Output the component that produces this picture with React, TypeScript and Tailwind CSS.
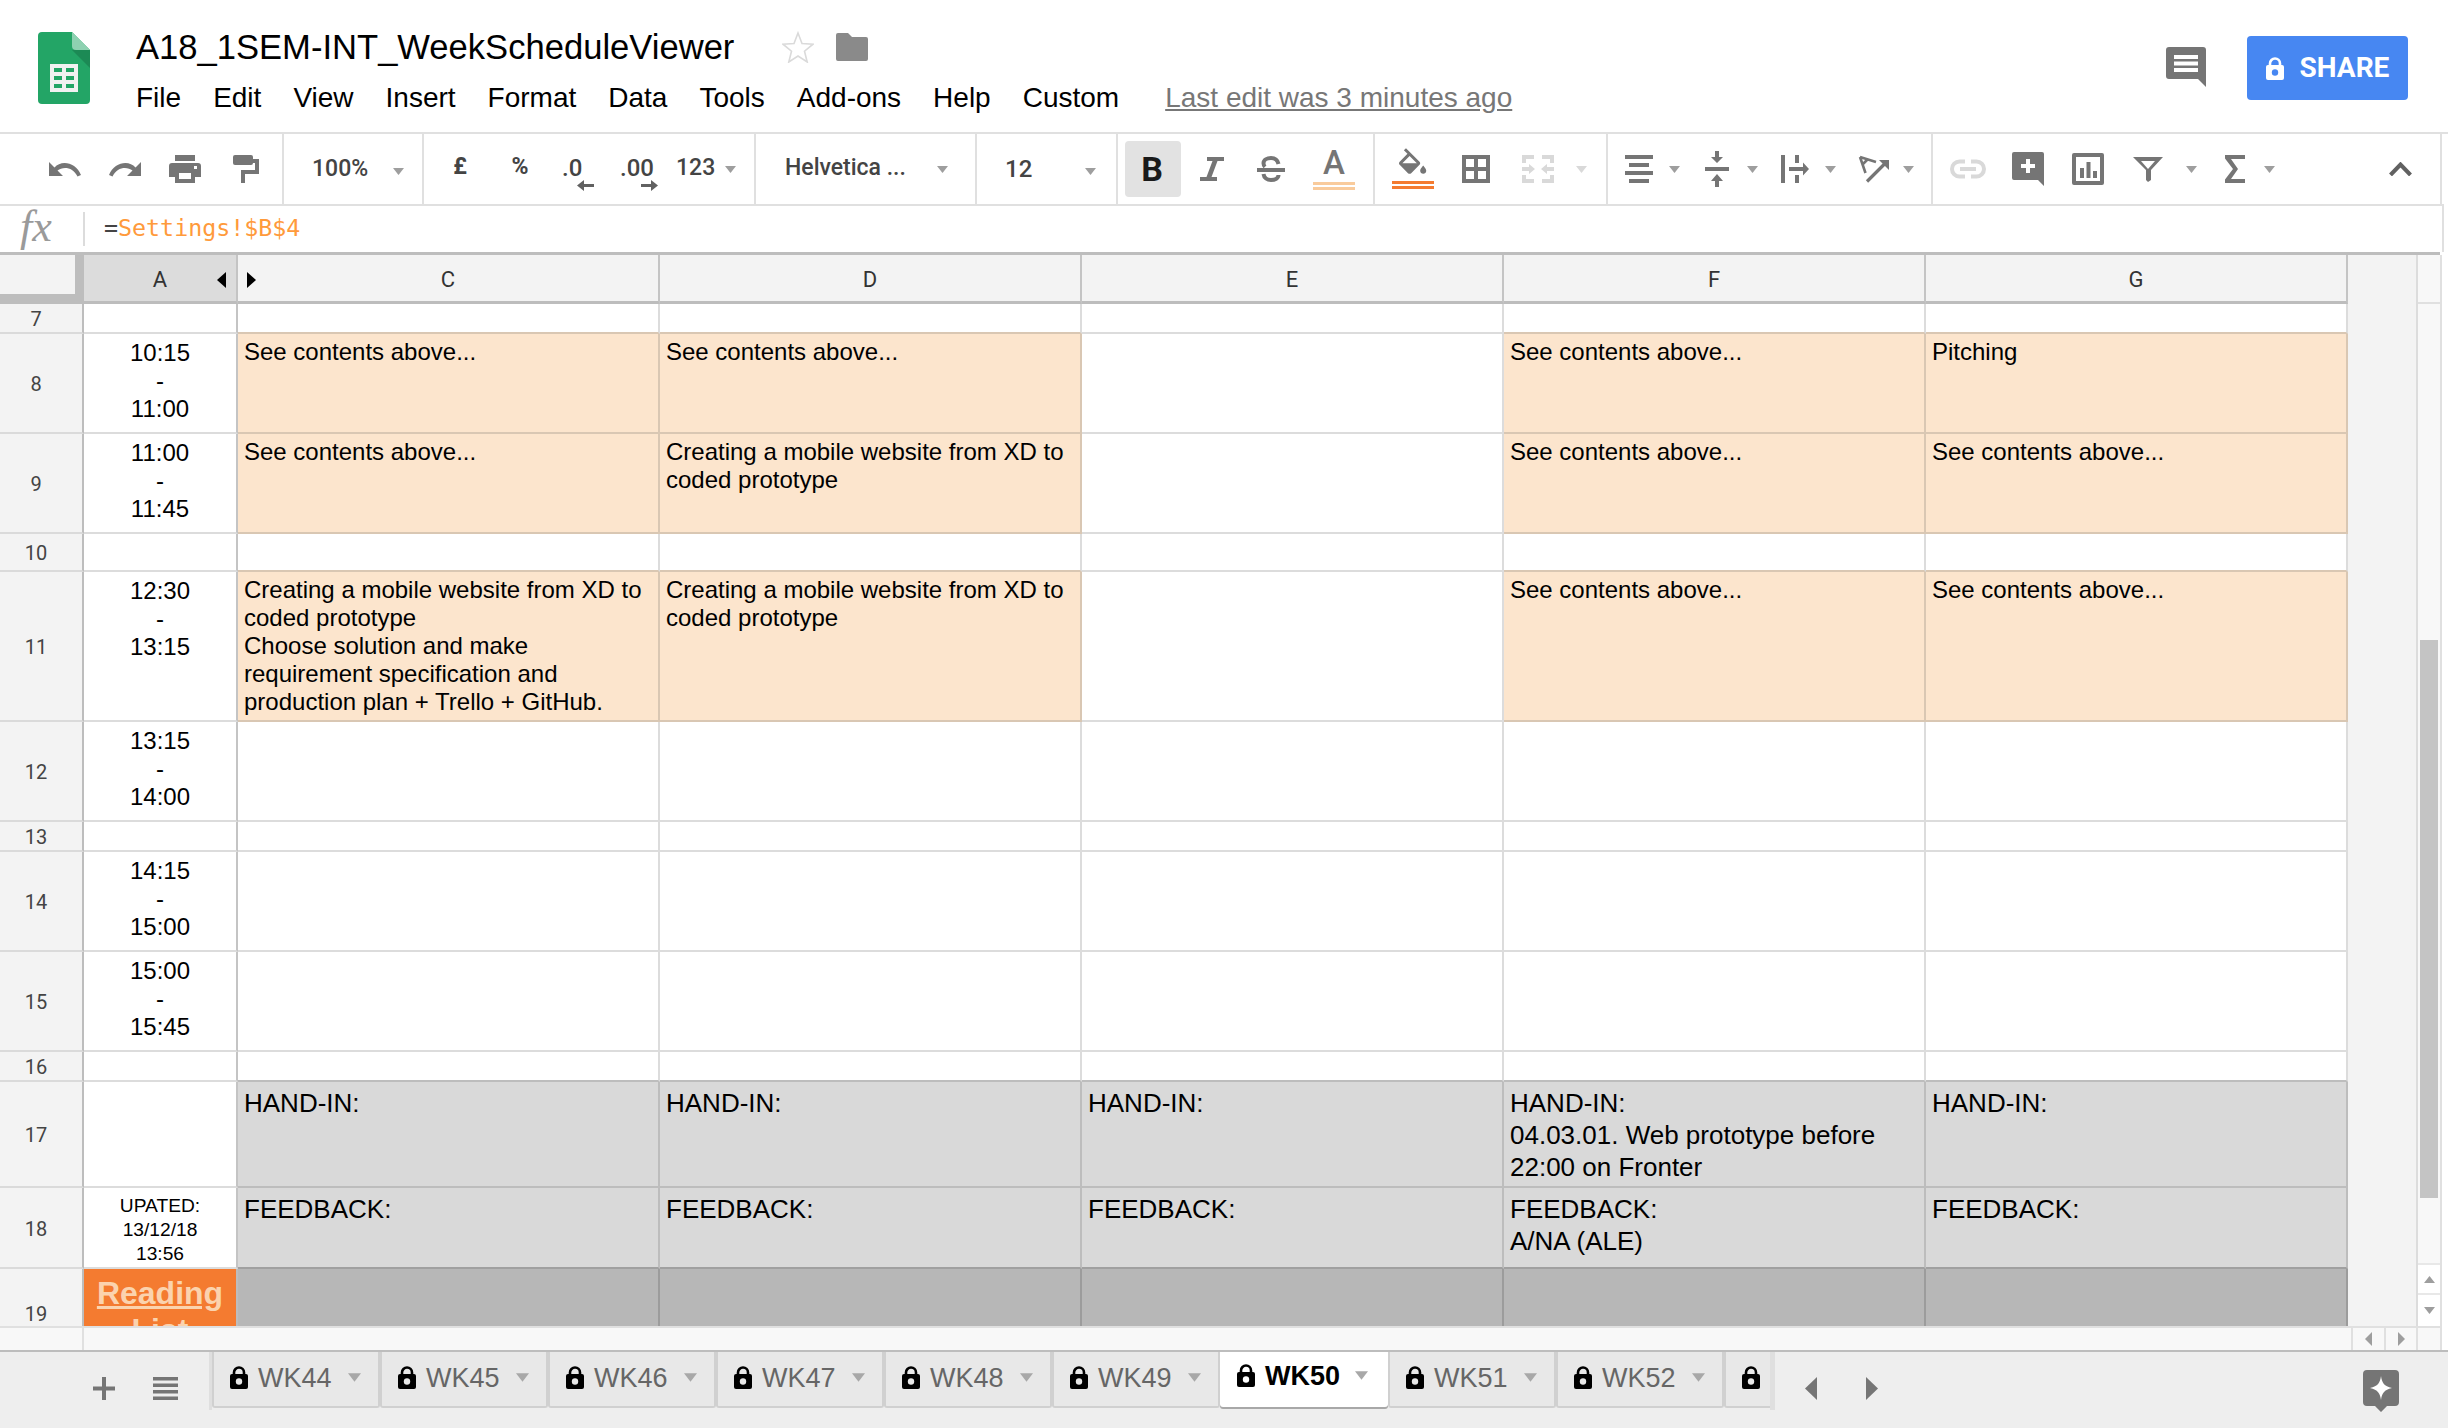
// App.tsx
import React from 'react';

const GRAY = '#757575';

const Caret = ({ className = 'ml-[14px] fill-[#9e9e9e]', dir = 'down' }: { className?: string; dir?: 'down' | 'up' }) => (
    <svg width="11" height="7" viewBox="0 0 11 7" className={`shrink-0 ${className}`}>
        <path d={dir === 'down' ? 'M0 0H11L5.5 7Z' : 'M0 7H11L5.5 0Z'} />
    </svg>
);

const Lock = ({ fg = '#000', bg = '#eee', className = '' }: { fg?: string; bg?: string; className?: string }) => (
    <svg width="18" height="23" viewBox="0 0 18 23" className={`shrink-0 ${className}`}>
        <path d="M4 9V6.5a5 5 0 0 1 10 0V9" fill="none" stroke={fg} strokeWidth="2.6" />
        <rect x="0" y="8" width="18" height="15" rx="2" fill={fg} />
        <circle cx="9" cy="15.5" r="3.2" fill={bg} />
    </svg>
);

const SheetsLogo = () => (
    <svg width="52" height="72" viewBox="0 0 52 72" className="shrink-0">
        <path d="M4 0H34L52 18V68a4 4 0 0 1-4 4H4a4 4 0 0 1-4-4V4a4 4 0 0 1 4-4Z" fill="#23a566" />
        <path d="M34 18L52 36V18Z" fill="#1c8a55" />
        <path d="M34 0L52 18H38a4 4 0 0 1-4-4Z" fill="#8ed1b1" />
        <rect x="12" y="32" width="28" height="28" fill="#f1f1f1" />
        <path d="M16 36h8v4h-8ZM28 36h8v4h-8ZM16 44h8v4h-8ZM28 44h8v4h-8ZM16 52h8v4h-8ZM28 52h8v4h-8Z" fill="#23a566" />
    </svg>
);

const Undo = ({ className = '' }: { className?: string }) => (
    <svg width="32" height="16" viewBox="0 0 32 16" className={`shrink-0 fill-[#757575] ${className}`}>
        <path d="M0 1V15H14L8.5 9.6C14 5.2 24 6 28.5 15.5L32 14C27 1 12 -1.5 5.5 6.5Z" />
    </svg>
);

const PrintIcon = () => (
    <svg width="32" height="28" viewBox="0 0 32 28" className="ml-[28px] shrink-0 fill-[#757575]">
        <path d="M6 0H26V6H6ZM3 8H29a3 3 0 0 1 3 3V22H26V28H6V22H0V11a3 3 0 0 1 3-3ZM10 18V24H22V18Z" fillRule="evenodd" />
        <rect x="25" y="11" width="3" height="3" fill="#fff" />
    </svg>
);

const PaintIcon = () => (
    <svg width="26" height="28" viewBox="0 0 26 28" className="ml-[32px] shrink-0 fill-[#757575]">
        <rect x="0" y="0" width="20" height="10" rx="2" />
        <path d="M20 4H26V19H12V28H8V15H22V8H20Z" />
    </svg>
);

const Decimal = ({ label, right }: { label: string; right?: boolean }) => (
    <div className={`w-[60px] mt-[8px] flex flex-col items-start shrink-0 font-['Roboto',sans-serif] font-medium text-[24px] leading-[24px] text-[#444] ${right ? 'pl-[10px]' : 'pl-[12px]'}`}>
        <span>{label}</span>
        <svg width="17" height="11" viewBox="0 0 17 11" className={`fill-[#616161] ${right ? 'ml-[21px]' : 'ml-[15px]'}`}>
            <path d={right ? 'M0 4H10V0L17 5.5L10 11V7H0Z' : 'M17 4H7V0L0 5.5L7 11V7H17Z'} />
        </svg>
    </div>
);

const ItalicIcon = () => (
    <svg width="24" height="24" viewBox="0 0 24 24" className="ml-[19px] shrink-0 fill-[#757575]">
        <path d="M7 0H24V4H17.5L11.5 20H17V24H0V20H6.5L12.5 4H7Z" />
    </svg>
);

const StrikeIcon = () => (
    <svg width="28" height="26" viewBox="0 0 28 26" className="ml-[33px] shrink-0">
        <path d="M0 12H28V16H0Z" fill={GRAY} />
        <path d="M21.5 8C20.5 3.6 17.5 2 14 2C10 2 6.5 4 6.5 7.2C6.5 8.8 7 9.8 8 10.8M6.5 18C7 22 10.2 24 14 24C18 24 21.5 22.2 21.5 19" fill="none" stroke={GRAY} strokeWidth="4" />
    </svg>
);

const FillIcon = () => (
    <svg width="28" height="26" viewBox="3 0 18.5 17" className="shrink-0 fill-[#757575]">
        <path d="M16.56 8.94L7.62 0 6.21 1.41l2.38 2.38-5.15 5.15c-.59.59-.59 1.54 0 2.12l5.5 5.5c.29.29.68.44 1.06.44s.77-.15 1.06-.44l5.5-5.5c.59-.58.59-1.53 0-2.12zM5.21 10L10 5.21 14.79 10H5.21zM19 11.5s-2 2.17-2 3.5c0 1.1.9 2 2 2s2-.9 2-2c0-1.33-2-3.5-2-3.5z" />
    </svg>
);

const BordersIcon = () => (
    <svg width="28" height="28" viewBox="0 0 28 28" className="ml-[28px] shrink-0 fill-[#757575]">
        <path d="M0 0H28V28H0ZM4 4V12H12V4ZM16 4V12H24V4ZM4 16V24H12V16ZM16 16V24H24V16Z" fillRule="evenodd" />
    </svg>
);

const MergeIcon = () => (
    <svg width="32" height="28" viewBox="0 0 32 28" className="ml-[32px] shrink-0 fill-[#d9d9d9]">
        <path d="M0 0H12V4H4V8H0ZM20 0H32V8H28V4H20ZM0 20H4V24H12V28H0ZM28 20H32V28H20V24H28ZM0 12H7V9L13 14L7 19V16H0ZM32 12H25V9L19 14L25 19V16H32Z" />
    </svg>
);

const AlignIcon = () => (
    <svg width="28" height="28" viewBox="0 0 28 28" className="ml-[17px] shrink-0 fill-[#757575]">
        <path d="M0 0H28V4H0ZM4 8H24V12H4ZM0 16H28V20H0ZM4 24H24V28H4Z" />
    </svg>
);

const VAlignIcon = () => (
    <svg width="24" height="36" viewBox="0 0 24 36" className="ml-[25px] shrink-0 fill-[#757575]">
        <path d="M10 0H14V6H18L12 12L6 6H10ZM0 16H24V20H0ZM12 23L18 30H14V36H10V30H6Z" />
    </svg>
);

const WrapIcon = () => (
    <svg width="28" height="28" viewBox="0 0 28 28" className="ml-[23px] shrink-0 fill-[#757575]">
        <path d="M0 0H4V28H0ZM14 0H18V8H14ZM14 20H18V28H14ZM8 12H22V7.5L28 14L22 20.5V16H8Z" />
    </svg>
);

const RotateIcon = () => (
    <svg width="31" height="28" viewBox="0 0 31 28" className="ml-[22px] shrink-0">
        <path d="M2 2L18 7M2 2L7.5 18M4 10L10 4" fill="none" stroke={GRAY} strokeWidth="2.6" />
        <path d="M9 26.5L28 7.5" fill="none" stroke={GRAY} strokeWidth="3.2" />
        <path d="M21 5H31V15Z" fill={GRAY} />
    </svg>
);

const LinkIcon = () => (
    <svg width="36" height="20" viewBox="0 0 36 20" className="ml-[17px] shrink-0">
        <path d="M15 2.5H9.5a7.5 7.5 0 0 0 0 15H15M21 2.5H26.5a7.5 7.5 0 0 1 0 15H21" fill="none" stroke="#d9d9d9" strokeWidth="4" />
        <rect x="10" y="8" width="16" height="4" fill="#d9d9d9" />
    </svg>
);

const AddCommentIcon = () => (
    <svg width="32" height="34" viewBox="0 0 32 34" className="ml-[26px] shrink-0">
        <path d="M2 0H30a2 2 0 0 1 2 2V34L26 28H2a2 2 0 0 1-2-2V2a2 2 0 0 1 2-2Z" fill={GRAY} />
        <path d="M14 7H18V12H23V16H18V21H14V16H9V12H14Z" fill="#fff" />
    </svg>
);

const ChartIcon = () => (
    <svg width="32" height="32" viewBox="0 0 32 32" className="ml-[28px] shrink-0 fill-[#757575]">
        <path d="M2 0H30a2 2 0 0 1 2 2V30a2 2 0 0 1-2 2H2a2 2 0 0 1-2-2V2a2 2 0 0 1 2-2ZM4 4V28H28V4Z" fillRule="evenodd" />
        <path d="M8 15H12V25H8ZM14.5 9H18.5V25H14.5ZM21 18H25V25H21Z" />
    </svg>
);

const FilterIcon = () => (
    <svg width="30" height="25" viewBox="0 0 30 25" className="ml-[29px] shrink-0 fill-[#757575]">
        <path d="M0 0H30L18 13V23L15 25L13 23V13ZM8 4L15 12L22 4Z" fillRule="evenodd" />
    </svg>
);

const SigmaIcon = () => (
    <svg width="20" height="28" viewBox="0 0 20 28" className="ml-[28px] shrink-0 fill-[#757575]">
        <path d="M0 0H20V4H6L13 14L6 24H20V28H0V24.5L8 14L0 3.5Z" />
    </svg>
);

const ChevronUp = () => (
    <svg width="23" height="14" viewBox="0 0 23 14" className="ml-[114px] shrink-0 fill-none stroke-[#616161]">
        <path d="M1.5 13L11.5 2.5L21.5 13" strokeWidth="4" />
    </svg>
);

const ColorBars = ({ color }: { color: string }) => (
    <div className="w-[42px] flex flex-col gap-[2px] mt-[7px]">
        <div className={`h-[3px] ${color}`} />
        <div className={`h-[3px] ${color}`} />
    </div>
);

const TB_TEXT = "font-['Roboto',sans-serif] font-medium text-[#444] text-[23px] leading-[28px] shrink-0";

const Toolbar = () => (
    <div className="h-[70px] shrink-0 w-[2442px] flex items-center border-r-2 border-[#e0e0e0]">
        <div className="h-full w-[284px] shrink-0 flex items-center border-r-2 border-[#e0e0e0]">
            <Undo className="ml-[49px]" />
            <Undo className="ml-[28px] -scale-x-100" />
            <PrintIcon />
            <PaintIcon />
        </div>
        <div className="h-full w-[140px] shrink-0 flex items-center border-r-2 border-[#e0e0e0]">
            <span className={`${TB_TEXT} ml-[28px] w-[57px]`}>100%</span>
            <Caret className="ml-[24px] fill-[#9e9e9e] mt-[4px]" />
        </div>
        <div className="h-full w-[332px] shrink-0 flex items-center border-r-2 border-[#e0e0e0]">
            <span className={`${TB_TEXT} !font-bold ml-[6px] w-[60px] text-center -mt-[4px]`}>£</span>
            <span className={`${TB_TEXT} !font-bold w-[60px] text-center -mt-[4px]`}>%</span>
            <Decimal label=".0" />
            <Decimal label=".00" right />
            <span className={`${TB_TEXT} ml-[6px] w-[40px] -mt-[2px]`}>123</span>
            <Caret className="ml-[9px] fill-[#9e9e9e]" />
        </div>
        <div className="h-full w-[221px] shrink-0 flex items-center border-r-2 border-[#e0e0e0]">
            <span className={`${TB_TEXT} ml-[29px] w-[122px] -mt-[2px]`}>Helvetica ...</span>
            <Caret className="ml-[30px] fill-[#9e9e9e]" />
        </div>
        <div className="h-full w-[141px] shrink-0 flex items-center border-r-2 border-[#e0e0e0]">
            <span className={`${TB_TEXT} ml-[28px] w-[27px] text-[24px]`}>12</span>
            <Caret className="ml-[53px] fill-[#9e9e9e] mt-[4px]" />
        </div>
        <div className="h-full w-[257px] shrink-0 flex items-center border-r-2 border-[#e0e0e0]">
            <div className="ml-[7px] w-[56px] h-[56px] shrink-0 rounded-[4px] bg-[#e2e2e2] flex items-center justify-center pr-[2px] font-['Roboto',sans-serif] font-bold text-[34px] text-[#1a1a1a]">B</div>
            <ItalicIcon />
            <StrikeIcon />
            <div className="ml-[28px] w-[42px] shrink-0 flex flex-col items-center">
                <span className="font-['Roboto',sans-serif] font-medium text-[33px] leading-[25px] text-[#757575] mt-[2px]">A</span>
                <ColorBars color="bg-[#f9cb9c]" />
            </div>
        </div>
        <div className="h-full w-[233px] shrink-0 flex items-center border-r-2 border-[#e0e0e0]">
            <div className="ml-[17px] w-[42px] shrink-0 flex flex-col items-center -mt-[1px]">
                <FillIcon />
                <ColorBars color="bg-[#f47b30]" />
            </div>
            <BordersIcon />
            <MergeIcon />
            <Caret className="ml-[22px] fill-[#d9d9d9]" />
        </div>
        <div className="h-full w-[325px] shrink-0 flex items-center border-r-2 border-[#e0e0e0]">
            <AlignIcon />
            <Caret className="ml-[16px] fill-[#9e9e9e]" />
            <VAlignIcon />
            <Caret className="ml-[18px] fill-[#9e9e9e]" />
            <WrapIcon />
            <Caret className="ml-[16px] fill-[#9e9e9e]" />
            <RotateIcon />
            <Caret className="ml-[14px] fill-[#9e9e9e]" />
        </div>
        <div className="h-full flex-1 flex items-center">
            <LinkIcon />
            <AddCommentIcon />
            <ChartIcon />
            <FilterIcon />
            <Caret className="ml-[23px] fill-[#9e9e9e]" />
            <SigmaIcon />
            <Caret className="ml-[19px] fill-[#9e9e9e]" />
            <ChevronUp />
        </div>
    </div>
);

const Header = () => (
    <div className="h-[134px] shrink-0 border-b-2 border-[#e0e0e0] flex items-start">
        <div className="ml-[38px] mt-[32px]"><SheetsLogo /></div>
        <div className="ml-[46px] mt-[22px]">
            <div className="flex items-center h-[50px]">
                <span className="text-[34.6px] leading-[50px] text-black w-[646px]">A18_1SEM-INT_WeekScheduleViewer</span>
                <svg width="32" height="32" viewBox="0 0 32 32" className="shrink-0">
                    <path d="M16 2L20 12.5L31 13.2L22.5 20.2L25.2 31L16 25L6.8 31L9.5 20.2L1 13.2L12 12.5Z" fill="none" stroke="#dadada" strokeWidth="1.6" />
                </svg>
                <svg width="32" height="28" viewBox="0 0 32 28" className="ml-[22px] shrink-0 fill-[#8a8a8a]">
                    <path d="M2 0H12L16 4H30a2 2 0 0 1 2 2V26a2 2 0 0 1-2 2H2a2 2 0 0 1-2-2V2a2 2 0 0 1 2-2Z" />
                </svg>
            </div>
            <div className="flex items-center h-[36px] mt-[8px] gap-[32px] text-[28px] leading-[36px] text-black">
                <span>File</span>
                <span>Edit</span>
                <span>View</span>
                <span>Insert</span>
                <span>Format</span>
                <span>Data</span>
                <span>Tools</span>
                <span>Add-ons</span>
                <span>Help</span>
                <span>Custom</span>
                <span className="ml-[14px] text-[#777] underline">Last edit was 3 minutes ago</span>
            </div>
        </div>
        <div className="ml-auto mt-[36px] flex items-start mr-[40px]">
            <svg width="40" height="40" viewBox="0 0 40 40" className="mt-[11px] shrink-0">
                <path d="M3 0H37a3 3 0 0 1 3 3V40L32 32H3a3 3 0 0 1-3-3V3a3 3 0 0 1 3-3Z" fill={GRAY} />
                <path d="M8 8H32V12H8ZM8 14.5H32V18.5H8ZM8 21H32V25H8Z" fill="#fff" />
            </svg>
            <div className="ml-[41px] w-[161px] h-[64px] rounded-[4px] bg-[#4787f2] flex items-center justify-center gap-[16px]">
                <Lock fg="#fff" bg="#4787f2" />
                <span className="font-['Roboto',sans-serif] font-bold text-white text-[28px] leading-none">SHARE</span>
            </div>
        </div>
    </div>
);

const FormulaBar = () => (
    <div className="h-[46px] shrink-0 w-[2442px] flex items-center border-t-2 border-r-2 border-[#e0e0e0] box-content">
        <span className="ml-[20px] w-[63px] -mt-[4px] font-['Liberation_Serif',serif] italic text-[44px] leading-[46px] text-[#9a9a9a]">fx</span>
        <div className="w-[2px] h-[34px] bg-[#dcdcdc]" />
        <span className="ml-[19px] -mt-[2px] font-['DejaVu_Sans_Mono',monospace] text-[23.3px] text-[#444]">=<span className="text-[#ff9a3b]">Settings!$B$4</span></span>
    </div>
);

type Kind = 'w' | 'wp' | 'wg' | 'p' | 'g' | 'gd' | 'd';

const KIND: Record<Kind, string> = {
    w: 'bg-white border-[#dcdcdc]',
    wp: 'bg-white border-r-[#dcdcdc] border-b-[#d9c7b3]',
    wg: 'bg-white border-r-[#dcdcdc] border-b-[#bdbdbd]',
    p: 'bg-[#fce5cd] border-[#d9c7b3]',
    g: 'bg-[#d9d9d9] border-[#bdbdbd]',
    gd: 'bg-[#d9d9d9] border-r-[#bdbdbd] border-b-[#a0a0a0]',
    d: 'bg-[#b7b7b7] border-[#9c9c9c]',
};

const See = 'See contents above...';
const Create = 'Creating a mobile website from XD to\ncoded prototype';

type Row = {
    n: number;
    a?: string;
    aKind?: 'time' | 'small' | 'read' | 'none';
    kinds: Kind[];
    texts?: string[];
    big?: boolean;
};

const PE: Kind[] = ['p', 'p', 'w', 'p', 'p'];

const ROWS: Row[] = [
    { n: 7, kinds: ['wp', 'wp', 'w', 'wp', 'wp'] },
    { n: 8, a: '10:15\n-\n11:00', aKind: 'time', kinds: PE, texts: [See, See, '', See, 'Pitching'] },
    { n: 9, a: '11:00\n-\n11:45', aKind: 'time', kinds: PE, texts: [See, Create, '', See, See] },
    { n: 10, kinds: ['wp', 'wp', 'w', 'wp', 'wp'] },
    {
        n: 11,
        a: '12:30\n-\n13:15',
        aKind: 'time',
        kinds: PE,
        texts: [
            'Creating a mobile website from XD to\ncoded prototype\nChoose solution and make\nrequirement specification and\nproduction plan + Trello + GitHub.',
            Create,
            '',
            See,
            See,
        ],
    },
    { n: 12, a: '13:15\n-\n14:00', aKind: 'time', kinds: ['w', 'w', 'w', 'w', 'w'] },
    { n: 13, kinds: ['w', 'w', 'w', 'w', 'w'] },
    { n: 14, a: '14:15\n-\n15:00', aKind: 'time', kinds: ['w', 'w', 'w', 'w', 'w'] },
    { n: 15, a: '15:00\n-\n15:45', aKind: 'time', kinds: ['w', 'w', 'w', 'w', 'w'] },
    { n: 16, kinds: ['wg', 'wg', 'wg', 'wg', 'wg'] },
    {
        n: 17,
        big: true,
        kinds: ['g', 'g', 'g', 'g', 'g'],
        texts: ['HAND-IN:', 'HAND-IN:', 'HAND-IN:', 'HAND-IN:\n04.03.01. Web prototype before\n22:00 on Fronter', 'HAND-IN:'],
    },
    {
        n: 18,
        big: true,
        a: 'UPATED:\n13/12/18\n13:56',
        aKind: 'small',
        kinds: ['gd', 'gd', 'gd', 'gd', 'gd'],
        texts: ['FEEDBACK:', 'FEEDBACK:', 'FEEDBACK:', 'FEEDBACK:\nA/NA (ALE)', 'FEEDBACK:'],
    },
    { n: 19, a: 'Reading\nList', aKind: 'read', kinds: ['d', 'd', 'd', 'd', 'd'] },
];

const ColHead = ({ label, sel }: { label: string; sel?: boolean }) => (
    <div className={`flex items-center justify-center pt-[2px] font-['Roboto',sans-serif] text-[22px] text-[#333] border-r-2 border-b-[3px] border-r-[#c4c4c4] border-b-[#bdbdbd] ${sel ? 'bg-[#dcdcdc]' : 'bg-[#f3f3f3]'}`}>
        {label}
    </div>
);

const ACell = ({ row }: { row: Row }) => {
    if (row.aKind === 'read') {
        return (
            <div className="bg-[#f47b30] whitespace-pre-line text-center font-bold underline text-[32px] leading-[37px] text-[#fbd3ae] pt-[6px] border-r-2 border-[#bdbdbd]">
                {row.a}
            </div>
        );
    }
    const size = row.aKind === 'small' ? 'text-[19.2px] leading-[24px] pt-[6px]' : 'text-[24px] leading-[28px] pt-[5px]';
    return (
        <div className={`bg-white whitespace-pre-line text-center text-black border-b-2 border-r-2 border-b-[#dcdcdc] border-r-[#c4c4c4] ${size}`}>
            {row.a}
        </div>
    );
};

const Sheet = () => (
    <div className="flex-1 min-h-0 flex w-[2442px] border-r-2 border-[#e0e0e0]">
        <div className="w-[2348px] h-full overflow-hidden shrink-0">
            <div className="grid grid-cols-[84px_154px_422px_422px_422px_422px_422px] grid-rows-[49px_30px_100px_100px_38px_150px_100px_30px_100px_100px_30px_106px_81px_90px]">
                <div className="bg-[#f3f3f3] border-r-[9px] border-b-[10px] border-[#bdbdbd]" />
                <div className="relative flex items-center justify-center pt-[2px] font-['Roboto',sans-serif] text-[22px] text-[#333] bg-[#dcdcdc] border-r-2 border-b-[3px] border-r-[#c4c4c4] border-b-[#bdbdbd]">
                    A
                    <svg width="9" height="16" viewBox="0 0 9 16" className="absolute right-[10px] top-[17px] fill-black">
                        <path d="M9 0V16L0 8Z" />
                    </svg>
                </div>
                <div className="relative flex items-center justify-center pt-[2px] font-['Roboto',sans-serif] text-[22px] text-[#333] bg-[#f3f3f3] border-r-2 border-b-[3px] border-r-[#c4c4c4] border-b-[#bdbdbd]">
                    C
                    <svg width="9" height="16" viewBox="0 0 9 16" className="absolute left-[9px] top-[17px] fill-black">
                        <path d="M0 0V16L9 8Z" />
                    </svg>
                </div>
                <ColHead label="D" />
                <ColHead label="E" />
                <ColHead label="F" />
                <ColHead label="G" />
                {ROWS.map((row) => (
                    <React.Fragment key={row.n}>
                        <div className="bg-[#f3f3f3] flex items-center justify-center pr-[10px] pt-[2px] font-['Roboto',sans-serif] text-[20px] text-[#444] border-r-2 border-b-2 border-r-[#bdbdbd] border-b-[#dadada]">
                            {row.n}
                        </div>
                        <ACell row={row} />
                        {row.kinds.map((kind, i) => (
                            <div
                                key={i}
                                className={`border-r-2 border-b-2 pl-[6px] text-black whitespace-pre-line ${KIND[kind]} ${row.big ? 'text-[26px] leading-[32px] pt-[5px]' : 'text-[24px] leading-[28px] pt-[4px]'}`}
                            >
                                {row.texts?.[i]}
                            </div>
                        ))}
                    </React.Fragment>
                ))}
            </div>
        </div>
        <div className="w-[70px] shrink-0 bg-[#f3f3f3] border-r-2 border-[#dcdcdc]" />
        <div className="w-[22px] shrink-0 flex flex-col bg-[#f8f8f8]">
            <div className="h-[49px] shrink-0 border-b-2 border-[#e0e0e0]" />
            <div className="flex-1 flex flex-col justify-start px-[2px] pt-[336px]">
                <div className="h-[558px] shrink-0 bg-[#c4c4c4]" />
            </div>
            <div className="h-[32px] shrink-0 border-t-2 border-b-2 border-[#e8e8e8] bg-white flex items-center justify-center">
                <Caret className="fill-[#9e9e9e]" dir="up" />
            </div>
            <div className="h-[31px] shrink-0 bg-white flex items-center justify-center">
                <Caret className="fill-[#9e9e9e]" />
            </div>
        </div>
    </div>
);

const HScroll = () => (
    <div className="h-[24px] shrink-0 w-[2442px] flex bg-[#f8f8f8] border-t-2 border-r-2 border-[#e0e0e0]">
        <div className="w-[84px] border-r-2 border-[#e0e0e0]" />
        <div className="flex-1" />
        <div className="w-[33px] flex items-center justify-center border-l-2 border-[#e0e0e0]">
            <svg width="7" height="14" viewBox="0 0 7 14" className="fill-[#9e9e9e]"><path d="M7 0V14L0 7Z" /></svg>
        </div>
        <div className="w-[32px] flex items-center justify-center border-l-2 border-[#e0e0e0]">
            <svg width="7" height="14" viewBox="0 0 7 14" className="fill-[#9e9e9e]"><path d="M0 0V14L7 7Z" /></svg>
        </div>
        <div className="w-[24px] border-l-2 border-[#e0e0e0]" />
    </div>
);

const WEEKS = ['WK44', 'WK45', 'WK46', 'WK47', 'WK48', 'WK49', 'WK50', 'WK51', 'WK52', 'WK01'];

const Tab = ({ label }: { label: string }) => {
    const active = label === 'WK50';
    return (
        <div
            className={`w-[168px] shrink-0 flex items-start rounded-b-[3px] ${active ? 'pl-[17px] h-[55px] bg-white shadow-[0_2px_0_#a8a8a8] pt-[12px]' : 'pl-[16px] h-[56px] bg-[#e8e8e8] border-x-2 border-b-2 border-[#d0d0d0] pt-[14px]'}`}
        >
            <Lock bg={active ? '#fff' : '#e8e8e8'} />
            <span className={`ml-[10px] w-[76px] shrink-0 font-['Liberation_Sans',sans-serif] text-[27px] leading-[24px] ${active ? 'font-bold text-black' : 'text-[#666]'}`}>{label}</span>
            <Caret className="ml-[14px] mt-[7px] !w-[13px] !h-[9px] fill-[#a8a8a8]" />
        </div>
    );
};

const BottomBar = () => (
    <div className="h-[78px] shrink-0 border-t-2 border-[#bdbdbd] bg-[#eeeeee] flex items-start">
        <svg width="22" height="23" viewBox="0 0 22 23" className="ml-[93px] mt-[25px] shrink-0 fill-[#757575]">
            <path d="M9 0H13V9.5H22V13.5H13V23H9V13.5H0V9.5H9Z" />
        </svg>
        <svg width="25" height="23" viewBox="0 0 25 23" className="ml-[38px] mt-[25px] shrink-0 fill-[#757575]">
            <path d="M0 0H25V3.5H0ZM0 6.5H25V10H0ZM0 13H25V16.5H0ZM0 19.5H25V23H0Z" />
        </svg>
        <div className="ml-[31px] w-[1566px] h-[58px] shrink-0 flex overflow-hidden border-l-[3px] border-r-[5px] border-[#dfdfdf]">
            {WEEKS.map((w) => (
                <Tab key={w} label={w} />
            ))}
        </div>
        <svg width="12" height="23" viewBox="0 0 12 23" className="ml-[30px] mt-[25px] shrink-0 fill-[#757575]">
            <path d="M12 0V23L0 11.5Z" />
        </svg>
        <svg width="12" height="23" viewBox="0 0 12 23" className="ml-[49px] mt-[25px] shrink-0 fill-[#757575]">
            <path d="M0 0V23L12 11.5Z" />
        </svg>
        <svg width="36" height="42" viewBox="0 0 36 42" className="ml-[485px] mt-[18px] shrink-0">
            <path d="M4 0H32a4 4 0 0 1 4 4V32a4 4 0 0 1-4 4H24L18 42L12 36H4a4 4 0 0 1-4-4V4a4 4 0 0 1 4-4Z" fill={GRAY} />
            <path d="M18 6C19 13 21 16 29 18C21 20 19 23 18 30C17 23 15 20 7 18C15 16 17 13 18 6Z" fill="#fff" />
        </svg>
    </div>
);

const App: React.FC = () => (
    <div className="w-[2448px] h-[1428px] overflow-hidden flex flex-col bg-white font-['Liberation_Sans',sans-serif]">
        <Header />
        <Toolbar />
        <FormulaBar />
        <div className="h-[3px] w-[2440px] shrink-0 bg-[#bdbdbd]" />
        <Sheet />
        <HScroll />
        <BottomBar />
    </div>
);

export default App;
